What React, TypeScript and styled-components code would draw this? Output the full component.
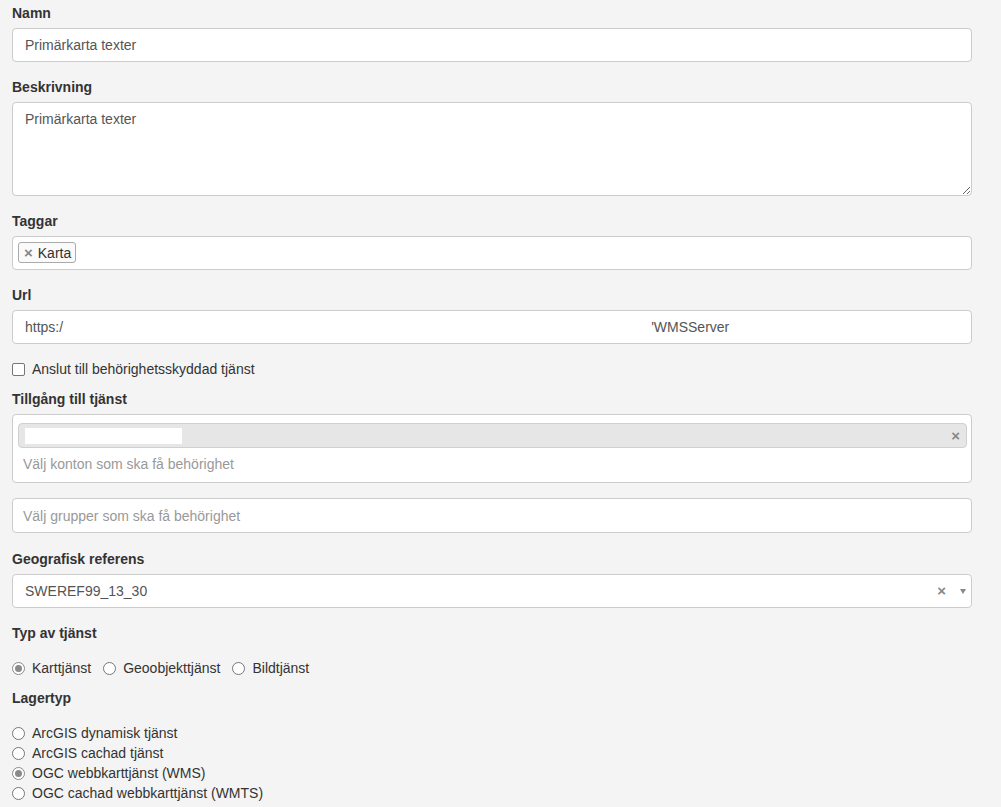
import React from "react";
import styled, { createGlobalStyle, css } from "styled-components";

const GlobalStyle = createGlobalStyle`
  * { box-sizing: border-box; }
  body {
    margin: 0;
    background: #f4f4f4;
    font-family: "Liberation Sans", Arial, sans-serif;
    font-size: 14px;
    line-height: 20px;
    color: #333;
  }
`;

const Page = styled.form`
  width: 984px;
  padding: 3px 12px 0 12px;
`;

const FormGroup = styled.div<{ $mb?: number }>`
  margin-bottom: ${(p) => (p.$mb ?? 15)}px;
`;

const Label = styled.label`
  display: block;
  font-weight: bold;
  color: #333;
  line-height: 20px;
  margin-bottom: 5px;
`;

const boxBase = css`
  display: block;
  width: 960px;
  background: #fff;
  border: 1px solid #ccc;
  border-radius: 4px;
  font-family: "Liberation Sans", Arial, sans-serif;
  font-size: 14px;
  color: #555;
`;

const Input = styled.input<{ $h?: number; $pl?: number }>`
  ${boxBase}
  height: ${(p) => p.$h ?? 34}px;
  padding: 6px 12px 6px ${(p) => p.$pl ?? 12}px;
  outline: none;
  &::placeholder {
    color: #999;
  }
`;

const TextArea = styled.textarea`
  ${boxBase}
  height: 94px;
  padding: 6px 12px;
  line-height: 20px;
  resize: vertical;
  outline: none;
`;

const TagBox = styled.div`
  ${boxBase}
  min-height: 34px;
  padding: 5px 5px;
`;

const AccessBox = styled.div`
  ${boxBase}
  min-height: 69px;
  padding: 8px 4px 0 5px;
`;

const Chip = styled.span`
  display: inline-flex;
  align-items: center;
  height: 21px;
  padding: 0 4px 0 5px;
  border: 1px solid #aaa;
  border-radius: 3px;
  background: #fafafa;
  color: #333;
  line-height: 18px;
  font-size: 14px;
`;

const ChipX = styled.span`
  color: #888;
  font-weight: bold;
  font-size: 15px;
  margin-right: 5px;
`;

const UrlText = styled.div`
  ${boxBase}
  height: 34px;
  padding: 6px 12px;
  display: flex;
  white-space: pre;
`;

const Gap = styled.span<{ $w: number }>`
  display: inline-block;
  width: ${(p) => p.$w}px;
`;

const CheckRow = styled.label`
  display: flex;
  align-items: center;
  height: 20px;
  color: #333;
`;

const CheckBox = styled.span`
  width: 13px;
  height: 13px;
  border: 1px solid #767676;
  border-radius: 2px;
  background: #fff;
  margin-right: 7px;
`;

const AccessRow = styled.div`
  display: flex;
  align-items: center;
  justify-content: space-between;
  height: 25px;
  background: #e6e6e6;
  border: 1px solid #d0d0d0;
  border-radius: 4px;
  padding: 0 6px 0 6px;
`;

const Redacted = styled.span`
  display: inline-block;
  width: 157px;
  height: 16px;
  background: #fff;
`;

const ClearX = styled.span`
  color: #888;
  font-weight: bold;
  font-size: 15px;
  line-height: 14px;
`;

const Placeholder = styled.div`
  color: #999;
  padding: 6px 0 0 5px;
  line-height: 20px;
`;

const Select = styled.div`
  ${boxBase}
  height: 34px;
  padding: 6px 12px;
  display: flex;
  align-items: center;
  justify-content: space-between;
`;

const SelectIcons = styled.span`
  display: flex;
  align-items: center;
  gap: 14px;
  margin-right: -7px;
`;

const Caret = styled.span`
  width: 0;
  height: 0;
  border-left: 3.5px solid transparent;
  border-right: 3.5px solid transparent;
  border-top: 5px solid #888;
`;

const Section = styled.div`
  padding-top: 0;
`;

const RadioInline = styled.div`
  display: flex;
  align-items: center;
  height: 20px;
  padding-top: 0;
  margin-top: 15px;
  margin-bottom: 10px;
  gap: 12px;
`;

const RadioStack = styled.div`
  margin-top: 15px;
`;

const RadioLabel = styled.label`
  display: flex;
  align-items: center;
  height: 20px;
  color: #333;
`;

const RadioDot = styled.span<{ $checked?: boolean }>`
  position: relative;
  width: 13px;
  height: 13px;
  border-radius: 50%;
  border: 1px solid ${(p) => (p.$checked ? "#8a8a8a" : "#767676")};
  background: #fff;
  margin-right: 7px;
  flex-shrink: 0;
  ${(p) =>
    p.$checked &&
    css`
      &::after {
        content: "";
        position: absolute;
        left: 2px;
        top: 2px;
        width: 7px;
        height: 7px;
        border-radius: 50%;
        background: #8a8a8a;
      }
    `}
`;

const Radio = ({ label, checked }: { label: string; checked?: boolean }) => (
  <RadioLabel>
    <RadioDot $checked={checked} />
    {label}
  </RadioLabel>
);

export default function App() {
  return (
    <>
      <GlobalStyle />
      <Page>
        <FormGroup>
          <Label>Namn</Label>
          <Input defaultValue="Primärkarta texter" />
        </FormGroup>

        <FormGroup>
          <Label>Beskrivning</Label>
          <TextArea defaultValue="Primärkarta texter" />
        </FormGroup>

        <FormGroup>
          <Label>Taggar</Label>
          <TagBox>
            <Chip>
              <ChipX>×</ChipX>Karta
            </Chip>
          </TagBox>
        </FormGroup>

        <FormGroup>
          <Label>Url</Label>
          <UrlText>
            https:/
            <Gap $w={588} />
            'WMSServer
          </UrlText>
        </FormGroup>

        <FormGroup $mb={10}>
          <CheckRow>
            <CheckBox />
            Anslut till behörighetsskyddad tjänst
          </CheckRow>
        </FormGroup>

        <FormGroup>
          <Label>Tillgång till tjänst</Label>
          <AccessBox>
            <AccessRow>
              <Redacted />
              <ClearX>×</ClearX>
            </AccessRow>
            <Placeholder>Välj konton som ska få behörighet</Placeholder>
          </AccessBox>
        </FormGroup>

        <FormGroup $mb={16}>
          <Input placeholder="Välj grupper som ska få behörighet" $h={35} $pl={10} />
        </FormGroup>

        <FormGroup>
          <Label>Geografisk referens</Label>
          <Select>
            <span>SWEREF99_13_30</span>
            <SelectIcons>
              <ClearX>×</ClearX>
              <Caret />
            </SelectIcons>
          </Select>
        </FormGroup>

        <Section>
          <Label>Typ av tjänst</Label>
          <RadioInline>
            <Radio label="Karttjänst" checked />
            <Radio label="Geoobjekttjänst" />
            <Radio label="Bildtjänst" />
          </RadioInline>
        </Section>

        <Section>
          <Label>Lagertyp</Label>
          <RadioStack>
            <Radio label="ArcGIS dynamisk tjänst" />
            <Radio label="ArcGIS cachad tjänst" />
            <Radio label="OGC webbkarttjänst (WMS)" checked />
            <Radio label="OGC cachad webbkarttjänst (WMTS)" />
          </RadioStack>
        </Section>
      </Page>
    </>
  );
}
